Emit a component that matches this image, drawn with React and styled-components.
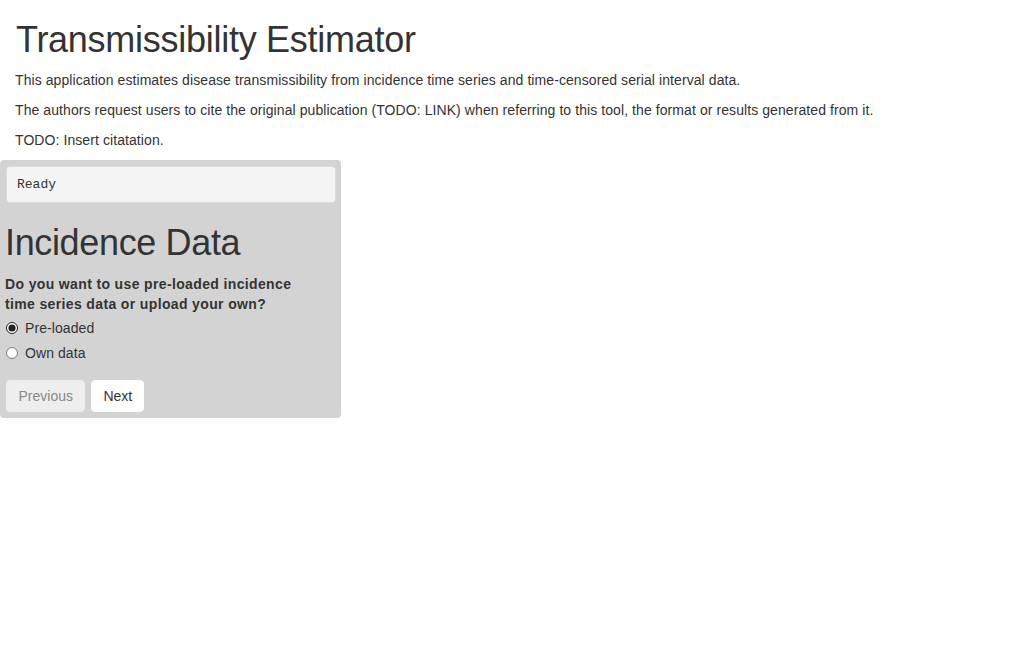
import React, { useState } from "react"
import styled, { createGlobalStyle } from "styled-components"

const GlobalStyle = createGlobalStyle`
    html, body {
        margin: 0;
        padding: 0;
        background: #fff;
    }
    body {
        font-family: "Liberation Sans", Arial, sans-serif;
        font-size: 14px;
        line-height: 20px;
        color: #333;
        letter-spacing: 0.08px;
    }
`

const Page = styled.div`
    padding: 0 15px;
`

const Title = styled.h2`
    font-size: 36px;
    font-weight: 400;
    line-height: 1.1;
    letter-spacing: -0.27px;
    margin: 20px 0 10px 1px;
`

const Para = styled.p`
    margin: 0 0 10px 0;
`

const Sidebar = styled.div`
    width: 341px;
    box-sizing: border-box;
    background: #d3d3d3;
    border-radius: 4px;
    padding: 6px 5px 6px 5px;
    margin-left: -15px;
`

const Status = styled.pre`
    margin: 0 0 10px 1px;
    padding: 9px 10px;
    background: #f4f4f4;
    border: 1px solid #dcdcdc;
    border-radius: 4px;
    font-family: "Liberation Mono", "Courier New", monospace;
    font-size: 13px;
    line-height: 17px;
    letter-spacing: 0;
    color: #333;
`

const SectionTitle = styled.h2`
    font-size: 36px;
    font-weight: 400;
    line-height: 1.1;
    letter-spacing: -0.35px;
    margin: 20px 0 12px 0;
`

const Question = styled.label`
    display: block;
    font-weight: 700;
    letter-spacing: 0.36px;
    width: 300px;
    margin-bottom: 4px;
`

const Options = styled.div`
    display: flex;
    flex-direction: column;
    gap: 5px;
`

const Option = styled.label`
    display: flex;
    align-items: center;
    height: 20px;
    cursor: pointer;

    input {
        margin: 0 7px 0 1px;
        width: 12px;
        height: 12px;
        accent-color: #222;
    }
`

const Buttons = styled.div`
    display: flex;
    gap: 6px;
    margin-top: 17px;
    padding-left: 1px;
`

const NavButton = styled.button`
    font-family: inherit;
    font-size: 14px;
    letter-spacing: 0;
    height: 32px;
    padding: 0 ${p => p.disabled ? "11.5px" : "11px"};
    border-radius: 4px;
    border: 1px solid ${p => p.disabled ? "#eeeeee" : "#fff"};
    background: ${p => p.disabled ? "#eeeeee" : "#fff"};
    color: ${p => p.disabled ? "#888" : "#333"};
    cursor: ${p => p.disabled ? "default" : "pointer"};
`

export default function App() {
    const [source, setSource] = useState("preloaded")

    return (
        <>
            <GlobalStyle />
            <Page>
                <Title>Transmissibility Estimator</Title>
                <Para>This application estimates disease transmissibility from incidence time series and time-censored serial interval data.</Para>
                <Para>The authors request users to cite the original publication (TODO: LINK) when referring to this tool, the format or results generated from it.</Para>
                <Para>TODO: Insert citatation.</Para>

                <Sidebar>
                    <Status>Ready</Status>
                    <SectionTitle>Incidence Data</SectionTitle>
                    <Question>Do you want to use pre-loaded incidence time series data or upload your own?</Question>
                    <Options>
                        <Option>
                            <input type="radio" name="source" checked={source === "preloaded"} onChange={() => setSource("preloaded")} />
                            Pre-loaded
                        </Option>
                        <Option>
                            <input type="radio" name="source" checked={source === "own"} onChange={() => setSource("own")} />
                            Own data
                        </Option>
                    </Options>
                    <Buttons>
                        <NavButton disabled>Previous</NavButton>
                        <NavButton>Next</NavButton>
                    </Buttons>
                </Sidebar>
            </Page>
        </>
    )
}
